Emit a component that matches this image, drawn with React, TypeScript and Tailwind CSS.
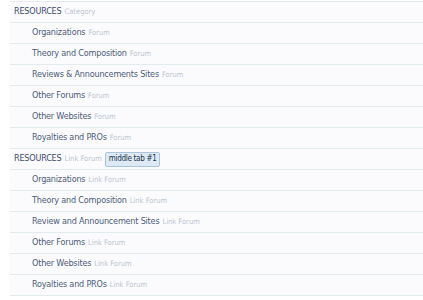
import React from "react";

type Row = { title: string; kind: string; level: 0 | 1; badge?: string };

const rows: Row[] = [
  { title: "RESOURCES", kind: "Category", level: 0 },
  { title: "Organizations", kind: "Forum", level: 1 },
  { title: "Theory and Composition", kind: "Forum", level: 1 },
  { title: "Reviews & Announcements Sites", kind: "Forum", level: 1 },
  { title: "Other Forums", kind: "Forum", level: 1 },
  { title: "Other Websites", kind: "Forum", level: 1 },
  { title: "Royalties and PROs", kind: "Forum", level: 1 },
  { title: "RESOURCES", kind: "Link Forum", level: 0, badge: "middle tab #1" },
  { title: "Organizations", kind: "Link Forum", level: 1 },
  { title: "Theory and Composition", kind: "Link Forum", level: 1 },
  { title: "Review and Announcement Sites", kind: "Link Forum", level: 1 },
  { title: "Other Forums", kind: "Link Forum", level: 1 },
  { title: "Other Websites", kind: "Link Forum", level: 1 },
  { title: "Royalties and PROs", kind: "Link Forum", level: 1 },
];

export default function App() {
  return (
    <div
      className="w-[423px] h-[300px] bg-white overflow-hidden pt-px"
      style={{ fontFamily: '"DejaVu Sans Condensed", "DejaVu Sans", sans-serif' }}
    >
      <div className="ml-[10px] border-t border-[#e3ebee] bg-[#fbfbfd]">
        {rows.map((r, i) => (
          <div
            key={i}
            className={`h-[21px] flex items-center border-b border-[#e3ebee] ${
              r.level === 0 ? "pl-[4px]" : "pl-[22px]"
            }`}
          >
            <span
              className={`text-[9px] tracking-[-0.2px] ${
                r.level === 0 ? "text-[#3b4b6a]" : "text-[#4b5b79]"
              }`}
            >
              {r.title}
            </span>
            <span className="ml-[3px] text-[7.5px] text-[#bcc5cf]">{r.kind}</span>
            {r.badge && (
              <span className="ml-[3px] h-[15px] px-[3px] flex items-center text-[8px] tracking-[-0.3px] text-[#22334a] bg-[#dde9f5] border border-[#a8c3dc] rounded-[2px]">
                {r.badge}
              </span>
            )}
          </div>
        ))}
      </div>
    </div>
  );
}
